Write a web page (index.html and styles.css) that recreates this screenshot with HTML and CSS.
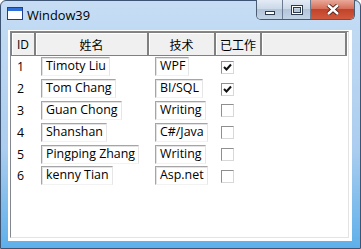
FILE: index.html
```html
<!DOCTYPE html>
<html lang="zh-CN">
<head>
    <meta charset="UTF-8"/>
    <title>Window39</title>
    <link rel="stylesheet" href="styles.css">
</head>
<body>

<div class="window">
    <div class="titlebar">
        <svg class="app-icon" width="16" height="13" viewBox="0 0 16 13">
            <rect x="0.5" y="0.5" width="15" height="12" fill="#fff" stroke="#1f3f8c"/>
            <rect x="1" y="1" width="14" height="3" fill="#2f6fd8"/>
        </svg>
        <span class="title">Window39</span>
        <div class="caption-buttons">
            <div class="cap-btn cap-min">
                <svg width="12" height="6" viewBox="0 0 12 6"><rect x="1.5" y="1.5" width="9" height="3" fill="#fff" stroke="#2c3a4e"/></svg>
            </div>
            <div class="cap-btn cap-max">
                <svg width="12" height="10" viewBox="0 0 12 10"><rect x="1.5" y="1.5" width="9" height="7" fill="none" stroke="#2c3a4e" stroke-width="3"/><rect x="1.5" y="1.5" width="9" height="7" fill="none" stroke="#fff"/></svg>
            </div>
            <div class="cap-btn cap-close">
                <svg width="14" height="11" viewBox="0 0 14 11"><path d="M2 1 L12 10 M12 1 L2 10" stroke="#4a1a12" stroke-width="4.2"/><path d="M2 1 L12 10 M12 1 L2 10" stroke="#fff" stroke-width="2.4"/></svg>
            </div>
        </div>
    </div>

    <div class="client">
        <div class="listview">
            <div class="lv-header">
                <div class="col col-id">ID</div>
                <div class="col col-name">姓名</div>
                <div class="col col-tech">技术</div>
                <div class="col col-work">已工作</div>
                <div class="col col-fill"></div>
            </div>
            <div class="lv-body" id="rows"></div>
        </div>
    </div>
</div>

<script>
    const people = [
        {id: 1, name: "Timoty Liu", tech: "WPF", working: true},
        {id: 2, name: "Tom Chang", tech: "BI/SQL", working: true},
        {id: 3, name: "Guan Chong", tech: "Writing", working: false},
        {id: 4, name: "Shanshan", tech: "C#/Java", working: false},
        {id: 5, name: "Pingping Zhang", tech: "Writing", working: false},
        {id: 6, name: "kenny Tian", tech: "Asp.net", working: false}
    ];

    const checkMark = '<svg width="9" height="8" viewBox="0 0 9 8"><path d="M1 4 L3.5 6.5 L8 1.5" fill="none" stroke="#111" stroke-width="2"/></svg>';

    const rowsEl = document.getElementById('rows');
    people.forEach(p => {
        const row = document.createElement('div');
        row.className = 'lv-row';
        row.innerHTML = `
            <div class="cell col-id">${p.id}</div>
            <div class="cell col-name"><span class="textbox">${p.name}</span></div>
            <div class="cell col-tech"><span class="textbox">${p.tech}</span></div>
            <div class="cell col-work"><span class="checkbox">${p.working ? checkMark : ''}</span></div>
        `;
        rowsEl.appendChild(row);
    });
</script>

</body>
</html>
```

FILE: styles.css
```css
* {
    box-sizing: border-box;
}

body {
    margin: 0;
    font-family: "Open Sans", "Noto Sans CJK SC", sans-serif;
    font-size: 12.4px;
    color: #000;
    background: #fff;
}

.window {
    width: 361px;
    height: 249px;
    border: 1px solid #3d5573;
    border-radius: 6px 6px 0 0;
    background: linear-gradient(#c6ddf4, #abcdef 60%, #5eb0ea);
    padding: 0 8px 7px 7px;
    display: flex;
    flex-direction: column;
}

.titlebar {
    height: 29px;
    display: flex;
    align-items: flex-start;
    margin-right: -3px;
}

.app-icon {
    margin-top: 6px;
    margin-left: -1px;
}

.title {
    margin-left: 4px;
    margin-top: 5px;
    font-size: 12.8px;
    color: #000;
}

.caption-buttons {
    margin-left: auto;
    display: flex;
    margin-top: -1px;
    height: 20px;
    border: 1px solid #4c5c70;
    border-top: none;
    border-radius: 0 0 5px 5px;
    overflow: hidden;
}

.cap-btn {
    display: flex;
    align-items: center;
    justify-content: center;
    height: 100%;
}

.cap-min, .cap-max {
    width: 26px;
    background: linear-gradient(#e3ebf5, #ccd9e8 45%, #b4c5da 50%, #c3d3e6);
    border-right: 1px solid #6a7b92;
}

.cap-min svg {
    margin-top: 6px;
}

.cap-max {
    width: 28px;
}

.cap-close {
    width: 43px;
    background: linear-gradient(#e9a99a, #d6705a 45%, #c2432a 50%, #d15a3e);
}

.client {
    flex: 1;
    background: #fff;
    padding: 1px 3px 3px 2px;
    display: flex;
}

.listview {
    flex: 1;
    border: 1px solid;
    border-color: #828790 #e3e3e3 #e3e3e3 #828790;
    display: flex;
    flex-direction: column;
}

.lv-header {
    display: flex;
    height: 24px;
}

.lv-header .col {
    height: 100%;
    background: #f0f0f0;
    border: 1px solid #808080;
    box-shadow: inset 1px 1px #fff;
    display: flex;
    align-items: center;
    justify-content: center;
    padding-top: 1px;
    font-size: 12px;
}

.col-id {
    width: 24px;
}

.col-name {
    width: 113px;
}

.col-tech {
    width: 67px;
}

.col-work {
    width: 46px;
}

.lv-header .col-fill {
    width: 86px;
    border-right-width: 2px;
}

.lv-row {
    display: flex;
    height: 21.8px;
    align-items: center;
}

.cell {
    height: 100%;
    display: flex;
    align-items: center;
}

.cell.col-id {
    padding-left: 6px;
}

.cell.col-name {
    padding-left: 6px;
}

.cell.col-tech {
    padding-left: 7px;
}

.cell.col-work {
    padding-left: 6px;
}

.textbox {
    height: 19px;
    line-height: 16px;
    padding: 0 3px 0 4px;
    border: 1px solid;
    border-color: #a5a5a5 #e6e6e6 #f2f2f2 #a5a5a5;
    box-shadow: inset 1px 1px #e3e3e3;
    white-space: nowrap;
}

.checkbox {
    width: 13px;
    height: 13px;
    border: 1px solid;
    border-color: #8e8f8f #d8d8d8 #d8d8d8 #8e8f8f;
    background: #fff;
    display: flex;
    align-items: center;
    justify-content: center;
    margin-top: 1px;
}
```
